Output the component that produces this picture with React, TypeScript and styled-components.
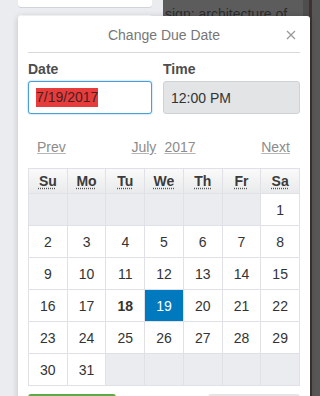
import React from "react";
import styled, { createGlobalStyle } from "styled-components";

const Global = createGlobalStyle`
  html, body { margin: 0; padding: 0; }
  body {
    width: 320px;
    height: 396px;
    overflow: hidden;
    font-family: "Liberation Sans", Arial, sans-serif;
  }
`;

const Stage = styled.div`
  position: relative;
  display: flex;
  width: 320px;
  height: 396px;
  overflow: hidden;
`;

const Lane = styled.div`
  width: 163px;
  flex: none;
  box-sizing: border-box;
  padding: 0 11px 0 18px;
  background: #ebecf0;
  display: flex;
  flex-direction: column;
  gap: 8px;
`;

const Card = styled.div<{ $h: number; $top?: boolean }>`
  height: ${(p) => p.$h}px;
  background: #fff;
  border-radius: ${(p) => (p.$top ? "0 0 3px 3px" : "3px")};
  box-shadow: 0 1px 0 #d0d3d8;
`;

const DarkPane = styled.div`
  width: 140px;
  flex: none;
  background: #5c5c5c;
  color: #2c2c2c;
  font-size: 14px;
  line-height: 16px;
  padding: 6px 0 0 2px;
  box-sizing: border-box;
  white-space: nowrap;
  overflow: hidden;
`;

const Edge = styled.div`
  flex: 1;
  background: #575757;
  border-left: 6px solid #4e4e4e;
  box-shadow: inset 3px 0 0 #3f3230;
`;

const Popover = styled.div`
  position: absolute;
  left: 18px;
  top: 16px;
  width: 292px;
  box-sizing: border-box;
  padding: 0 10px 10px;
  background: #fff;
  border-radius: 3px;
  box-shadow: 0 1px 6px rgba(0, 0, 0, 0.2);
`;

const Header = styled.div`
  position: relative;
  height: 36px;
  border-bottom: 1px solid #d6dadc;
  text-align: center;
  line-height: 38px;
  font-size: 14px;
  color: #777;
`;

const Close = styled.button`
  position: absolute;
  right: 3px;
  top: 13px;
  width: 12px;
  height: 12px;
  padding: 0;
  border: 0;
  background: none;
  display: flex;
  align-items: center;
  justify-content: center;
`;

const Fields = styled.div`
  display: grid;
  grid-template-columns: 124px 1fr;
  column-gap: 11px;
  margin-top: 7px;
`;

const Field = styled.div`
  display: flex;
  flex-direction: column;
`;

const Label = styled.div`
  font-size: 14px;
  font-weight: 700;
  line-height: 18px;
  color: #4d4d4d;
  margin-bottom: 3px;
`;

const Input = styled.div<{ $focus?: boolean }>`
  height: 33px;
  box-sizing: border-box;
  border: 1px solid ${(p) => (p.$focus ? "#4a9fda" : "#cdd2d4")};
  background: ${(p) => (p.$focus ? "#fff" : "#e2e4e6")};
  box-shadow: ${(p) => (p.$focus ? "0 0 2px #7fbce6" : "none")};
  border-radius: 3px;
  padding: 0 7px;
  display: flex;
  align-items: center;
  font-size: 14px;
  color: #333;
`;

const Selected = styled.span`
  background: #e63c3c;
  color: #4a1f1f;
  line-height: 19px;
`;

const Nav = styled.div`
  display: flex;
  justify-content: space-between;
  align-items: center;
  margin-top: 24px;
  padding: 0 10px 0 9px;
  line-height: 18px;
  font-size: 14px;
`;

const NavLink = styled.a`
  color: #8c8c8c;
  text-decoration: underline;
  text-decoration-color: #b5b5b5;
`;

const MonthYear = styled.div`
  display: flex;
  gap: 8px;
`;

const Calendar = styled.div`
  display: grid;
  grid-template-columns: repeat(7, 1fr);
  grid-template-rows: 24px repeat(6, 31px);
  gap: 1px;
  margin-top: 12px;
  border: 1px solid #dfe1e6;
  background: #dfe1e6;
`;

const DayName = styled.abbr`
  display: flex;
  align-items: center;
  justify-content: center;
  background: linear-gradient(#fafafa, #e9eaeb);
  font-size: 14px;
  font-weight: 700;
  color: #3b3b3b;
  text-decoration: underline dotted #555;
  text-underline-offset: 2px;
`;

const Day = styled.div<{ $empty?: boolean; $today?: boolean; $sel?: boolean }>`
  display: flex;
  align-items: center;
  justify-content: center;
  font-size: 14px;
  font-weight: ${(p) => (p.$today ? 700 : 400)};
  color: ${(p) => (p.$sel ? "#fff" : "#333")};
  background: ${(p) => (p.$sel ? "#0079bf" : p.$empty ? "#ebecf0" : "#fff")};
`;

const Buttons = styled.div`
  display: flex;
  justify-content: space-between;
  margin-top: 8px;
`;

const Btn = styled.button<{ $primary?: boolean }>`
  width: ${(p) => (p.$primary ? 88 : 92)}px;
  height: 32px;
  border: 0;
  border-radius: 3px;
  background: ${(p) => (p.$primary ? "#5aac44" : "#e2e4e6")};
`;

const days = ["Su", "Mo", "Tu", "We", "Th", "Fr", "Sa"];
const titles = ["Sunday", "Monday", "Tuesday", "Wednesday", "Thursday", "Friday", "Saturday"];

export default function App() {
  const cells: (number | null)[] = [];
  for (let i = 0; i < 6; i++) cells.push(null);
  for (let d = 1; d <= 31; d++) cells.push(d);
  while (cells.length < 42) cells.push(null);

  return (
    <>
      <Global />
      <Stage>
        <Lane>
          <Card $h={7} $top />
          <Card $h={120} />
        </Lane>
        <DarkPane>sign: architecture of</DarkPane>
        <Edge />
        <Popover>
          <Header>
            Change Due Date
            <Close aria-label="Close">
              <svg width="10" height="10" viewBox="0 0 10 10">
                <path d="M1 1 L9 9 M9 1 L1 9" stroke="#999" strokeWidth="1.3" fill="none" />
              </svg>
            </Close>
          </Header>
          <Fields>
            <Field>
              <Label>Date</Label>
              <Input $focus>
                <Selected>7/19/2017</Selected>
              </Input>
            </Field>
            <Field>
              <Label>Time</Label>
              <Input>12:00 PM</Input>
            </Field>
          </Fields>
          <Nav>
            <NavLink>Prev</NavLink>
            <MonthYear>
              <NavLink>July</NavLink>
              <NavLink>2017</NavLink>
            </MonthYear>
            <NavLink>Next</NavLink>
          </Nav>
          <Calendar>
            {days.map((d, i) => (
              <DayName key={d} title={titles[i]}>
                {d}
              </DayName>
            ))}
            {cells.map((c, i) => (
              <Day key={i} $empty={c === null} $today={c === 18} $sel={c === 19}>
                {c ?? ""}
              </Day>
            ))}
          </Calendar>
          <Buttons>
            <Btn $primary aria-label="Save" />
            <Btn aria-label="Remove" />
          </Buttons>
        </Popover>
      </Stage>
    </>
  );
}
